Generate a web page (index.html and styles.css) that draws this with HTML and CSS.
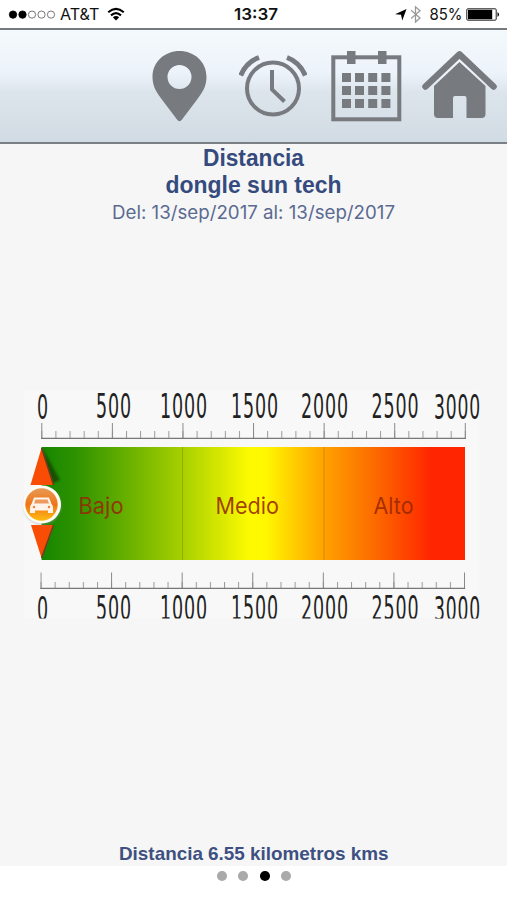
FILE: index.html
```html
<!DOCTYPE html>
<html lang="es">
<head>
<meta charset="utf-8">
<title>Distancia</title>
<link rel="stylesheet" href="styles.css">
</head>
<body>
<header class="status">
  <svg class="signal" width="48" height="28" viewBox="0 0 48 28"><g stroke="#000" stroke-width=".8"><circle cx="5" cy="14.6" r="3.7"/><circle cx="14.5" cy="14.6" r="3.7"/><g fill="#fff" stroke="#555"><circle cx="24" cy="14.6" r="3.6"/><circle cx="33.5" cy="14.6" r="3.6"/><circle cx="43" cy="14.6" r="3.6"/></g></g></svg>
  <svg class="label" width="49" height="28"><text x="4" y="20.2" textLength="39.500" lengthAdjust="spacingAndGlyphs">AT&amp;T</text></svg>
  <svg width="24" height="28" viewBox="0 0 24 28"><g fill="none" stroke="#000" stroke-width="2.1"><path d="M3.2 12.2Q11 5.6 18.8 12.2M6 15.4Q11 11 16 15.4"/></g><path d="M7.8 17.3Q11 14.8 14.2 17.3L11 20.4Z"/></svg>
  <svg class="label clock" width="48" height="28"><text x="2" y="20.2" textLength="44" lengthAdjust="spacingAndGlyphs">13:37</text></svg>
  <div class="status-right">
    <svg width="16" height="28" viewBox="0 0 16 28"><path d="M11.500 9L7.300 20.6L6 14.8L.1 14.2Z"/></svg>
    <svg width="18" height="28" viewBox="0 0 18 28"><path d="M0 10.2L9 18L4.500 22V6.8L9 10.7L0 18.5" fill="none" stroke="#999" stroke-width="1.3"/></svg>
    <svg class="label" width="37" height="28"><text x=".5" y="20.2" textLength="33" lengthAdjust="spacingAndGlyphs">85%</text></svg>
    <svg width="34" height="28" viewBox="0 0 34 28"><rect x=".8" y="8.8" width="29.4" height="11.4" rx="1" fill="#fff" stroke="#222" stroke-width="1"/><rect x="2" y="9.8" width="24.2" height="9.4"/><path d="M31.5 12Q34.6 14.5 31.5 17Z"/></svg>
  </div>
</header>
<nav class="toolbar">
  <svg width="56" height="72" viewBox="0 0 56 72"><path fill-rule="evenodd" d="M27.5 1C42 1 54.5 11.5 54.5 27C54.5 37 50 43 44 51L30 69.5Q27.5 73 25 69.5L11 51C5 43 .5 37 .5 27C.5 11.5 13 1 27.5 1ZM27.500 15A12 12 0 1 0 27.500 39A12 12 0 1 0 27.500 15Z"/></svg>
  <svg width="68" height="72" viewBox="0 0 68 72"><g fill="none" stroke="#777a7f"><circle cx="34" cy="38.500" r="26" stroke-width="4"/><path d="M33 20V39.500L45.500 51.500" stroke-width="4"/><path d="M1.700 25.500Q7.500 12 20 7.500M48 7.500Q60.500 12 66.300 25.500" stroke-width="5"/></g></svg>
  <svg width="71" height="72" viewBox="0 0 71 72"><rect x="2.300" y="7.300" width="66" height="62" fill="none" stroke="#777a7f" stroke-width="4"/><path d="M16 1h8.500v13H16zM47 1h8.500v13H47z"/><path d="M11 23h9v9h-9zm13 0h9v9h-9zm13.200 0h9v9h-9zm13.200 0h9v9h-9zM11 36h9v9h-9zm13 0h9v9h-9zm13.200 0h9v9h-9zm13.200 0h9v9h-9zM11 49h9v9h-9zm13 0h9v9h-9zm13.200 0h9v9h-9zm13.200 0h9v9h-9z"/></svg>
  <svg width="75" height="72" viewBox="0 0 75 72"><path d="M3.500 36.500L37.500 4.300L71.500 36.500" fill="none" stroke="#777a7f" stroke-width="6.500" stroke-linecap="round" stroke-linejoin="round"/><path d="M37.500 12L63.500 36V64Q63.500 68 59.500 68H44.500V48Q44.500 46 42.500 46H33Q31 46 31 48V68H16Q12 68 12 64V36Z"/></svg>
</nav>
<main class="report">
  <svg class="heading" width="507" height="86" viewBox="0 144 507 86"><g class="title"><text x="203" y="165.500" textLength="101" lengthAdjust="spacingAndGlyphs">Distancia</text><text x="165.500" y="192.500" textLength="176" lengthAdjust="spacingAndGlyphs">dongle sun tech</text></g><text class="range" x="112" y="218.700" textLength="283" lengthAdjust="spacingAndGlyphs">Del: 13/sep/2017 al: 13/sep/2017</text></svg>
  <svg class="gauge" width="507" height="260" viewBox="0 380 507 260">
    <defs>
      <linearGradient id="heat"><stop offset="0" stop-color="#168500"/><stop offset=".08" stop-color="#2e9200"/><stop offset=".33" stop-color="#a5cf00"/><stop offset=".49" stop-color="#fcfa00"/><stop offset=".53" stop-color="#fff700"/><stop offset=".67" stop-color="#ffa000"/><stop offset=".78" stop-color="#fc6e00"/><stop offset=".92" stop-color="#ff2500"/><stop offset="1" stop-color="#ff2500"/></linearGradient>
      <linearGradient id="badge" x2="0" y2="1"><stop offset="0" stop-color="#e89a54"/><stop offset=".5" stop-color="#ef7417"/><stop offset="1" stop-color="#ffbd12"/></linearGradient>
      <pattern id="minor" x="41.300" y="0" width="14.117" height="700" patternUnits="userSpaceOnUse"><path d="M.5 0V700" stroke="#999" stroke-width="1"/></pattern>
      <pattern id="major" x="41.300" y="0" width="70.583" height="700" patternUnits="userSpaceOnUse"><path d="M.5 0V700" stroke="#888" stroke-width="1"/></pattern>
      <clipPath id="lower"><path d="M0 590H507V618.500H0Z"/></clipPath>
      <filter id="soft"><feGaussianBlur stdDeviation="1.300"/></filter>
    </defs>
    <path d="M24 391H479V618H24Z" fill="#f8f8f8"/>
    <g class="scale">
      <text transform="translate(37 419) scale(.53 1)">0</text><text transform="translate(96 417.500) scale(.53 1)">500</text><text transform="translate(160 417.500) scale(.53 1)">1000</text><text transform="translate(231 417.500) scale(.53 1)">1500</text><text transform="translate(301 417.500) scale(.53 1)">2000</text><text transform="translate(371.500 417.500) scale(.53 1)">2500</text><text transform="translate(434 419) scale(.52 1)">3000</text>
    </g>
    <path d="M41 431H466V438H41Z" fill="url(#minor)"/><path d="M41 423H466V438H41Z" fill="url(#major)"/><path d="M41 438.300H466" stroke="#777" stroke-width="1.200"/>
    <rect x="41.500" y="447" width="423.500" height="113" fill="url(#heat)"/>
    <path d="M182.500 447V560M324 447V560" stroke="#704800" stroke-opacity=".28"/>
    <g class="zone"><text x="78.500" y="514" textLength="45" lengthAdjust="spacingAndGlyphs">Bajo</text><text x="215.500" y="514" textLength="63.500" lengthAdjust="spacingAndGlyphs">Medio</text><text x="373.500" y="514" textLength="40" lengthAdjust="spacingAndGlyphs">Alto</text></g>
    <path d="M43 449L60 480L51 484Z" fill="#193f00" opacity=".75" filter="url(#soft)"/>
    <path d="M41.500 448L53.500 485H30.500ZM31 525H53.500L41.500 558Z" fill="#f94d05"/>
    <path d="M41.500 448L53.500 485M53.500 525L41.500 558" stroke="#743b20" stroke-width="1.400"/>
    <path d="M25 523H56" stroke="#555" stroke-width="3" opacity=".5" filter="url(#soft)"/>
    <circle cx="42.500" cy="506" r="19" fill="#999" opacity=".4" filter="url(#soft)"/>
    <circle cx="42" cy="504.500" r="19" fill="#fffdf6"/><circle cx="41.500" cy="504.500" r="16.200" fill="url(#badge)"/>
    <path d="M34 497.500H49L51.500 504Q53 505 53 508V513H48V510.500H35V513H30V508Q30 505 31.500 504Z" fill="#fff3ea"/><path d="M35.500 499.500H47.500L49 503.500H34Z" fill="#ed9a60"/><circle cx="34" cy="507" r="1.200" fill="#ed7e3c"/><circle cx="49" cy="507" r="1.200" fill="#ed7e3c"/>
    <g transform="translate(-.8 0)"><path d="M41 582H466V588H41Z" fill="url(#minor)"/><path d="M41 572.500H466V588H41Z" fill="url(#major)"/><path d="M41 588.400H466" stroke="#777" stroke-width="1.200"/></g>
    <g class="scale" clip-path="url(#lower)">
      <text transform="translate(37 621) scale(.53 1)">0</text><text transform="translate(96 619.500) scale(.53 1)">500</text><text transform="translate(160 619.500) scale(.53 1)">1000</text><text transform="translate(231 619.500) scale(.53 1)">1500</text><text transform="translate(301 619.500) scale(.53 1)">2000</text><text transform="translate(371.500 619.500) scale(.53 1)">2500</text><text transform="translate(434 621) scale(.52 1)">3000</text>
    </g>
  </svg>
  <svg class="summary" width="507" height="26" viewBox="0 840 507 26"><text x="119" y="859.500" textLength="269.500" lengthAdjust="spacingAndGlyphs">Distancia 6.55 kilometros kms</text></svg>
</main>
<footer class="pager"><i></i><i></i><i class="on"></i><i></i></footer>
</body>
</html>
```
FILE: styles.css
```css
* { box-sizing: border-box; }
body { margin: 0; width: 507px; height: 900px; display: flex; flex-direction: column; background: #fff; font-family: Inter, "Liberation Sans", sans-serif; font-optical-sizing: none; overflow: hidden; }
svg { display: block; flex: none; }
.status { height: 28px; display: flex; padding-left: 8px; }
.label { font-size: 16.5px; fill: #111; }
.clock { margin-left: 103px; font-weight: 600; }
.status-right { display: flex; margin-left: auto; padding-right: 7px; }
.status-right svg:first-child { margin-right: 0; }
.toolbar { height: 116px; display: flex; align-items: flex-start; justify-content: flex-end; padding: 20px 10px 0 0; border-top: 2px solid #777a80; border-bottom: 2px solid #7b8087; background: linear-gradient(#f4f9fc, #edf3fa 38%, #dde5ec 55%, #d1dbe3); fill: #777a7f; }
.toolbar svg + svg { margin-left: 31px; }
.toolbar svg:nth-child(3) { margin-left: 24px; }
.toolbar svg:nth-child(4) { margin-left: 20px; }
.report { height: 722px; display: flex; flex-direction: column; background: #f6f6f6; }
.title { font-size: 23px; font-weight: 700; fill: #354a7d; }
.range { font-size: 18.5px; fill: #5a6a91; }
.heading, .summary { font-family: "Liberation Sans", sans-serif; }
.heading .range { font-family: Inter, sans-serif; }
.gauge { margin-top: 150px; }
.scale { font-family: "DejaVu Sans", sans-serif; font-size: 33px; letter-spacing: 1.6px; fill: #222; }
.zone { font-size: 22.5px; fill: #982800; fill-opacity: .88; }
.summary { margin-top: auto; font-size: 19px; font-weight: 700; fill: #3d5081; }
.pager { height: 34px; display: flex; justify-content: center; gap: 11.8px; padding: 5px 0 0 1px; }
.pager i { width: 9.7px; height: 9.7px; border-radius: 50%; background: #aaa; }
.pager .on { background: #000; }
```
